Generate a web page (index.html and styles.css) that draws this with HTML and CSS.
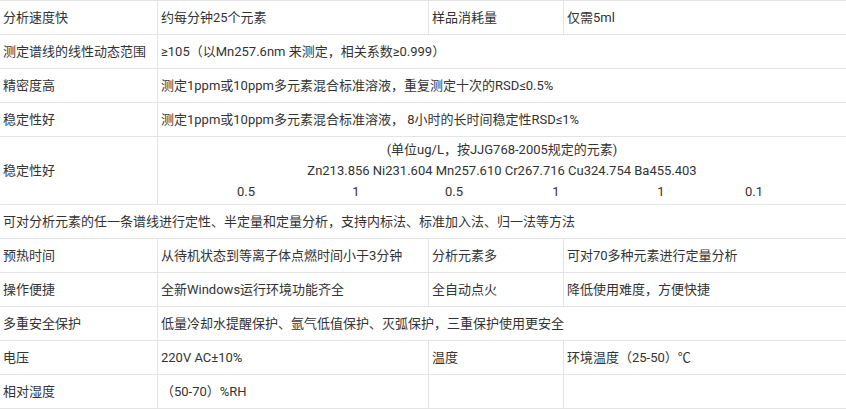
FILE: index.html
```html
<!DOCTYPE html>
<html lang="zh-CN">
<head>
<meta charset="utf-8">
<title>参数</title>
<link rel="stylesheet" href="styles.css">
</head>
<body>
<table class="spec">
  <colgroup>
    <col class="c1"><col class="c2"><col class="c3"><col class="c4">
  </colgroup>
  <tbody>
    <tr><td>分析速度快</td><td>约每分钟25个元素</td><td>样品消耗量</td><td>仅需5ml</td></tr>
    <tr><td>测定谱线的线性动态范围</td><td colspan="3">≥105（以Mn257.6nm 来测定，相关系数≥0.999）</td></tr>
    <tr><td>精密度高</td><td colspan="3">测定1ppm或10ppm多元素混合标准溶液，重复测定十次的RSD≤0.5%</td></tr>
    <tr><td>稳定性好</td><td colspan="3">测定1ppm或10ppm多元素混合标准溶液， 8小时的长时间稳定性RSD≤1%</td></tr>
    <tr class="tall">
      <td>稳定性好</td>
      <td colspan="3" class="center">
        <div class="line">(单位ug/L，按JJG768-2005规定的元素)</div>
        <div class="line">Zn213.856 Ni231.604 Mn257.610 Cr267.716 Cu324.754 Ba455.403</div>
        <div class="line nums"><span class="w100">0.5</span><span class="w120">1</span><span class="w76">0.5</span><span class="w128">1</span><span class="w82">1</span><span class="w104">0.1</span></div>
      </td>
    </tr>
    <tr><td colspan="4">可对分析元素的任一条谱线进行定性、半定量和定量分析，支持内标法、标准加入法、归一法等方法</td></tr>
    <tr><td>预热时间</td><td>从待机状态到等离子体点燃时间小于3分钟</td><td>分析元素多</td><td>可对70多种元素进行定量分析</td></tr>
    <tr><td>操作便捷</td><td>全新Windows运行环境功能齐全</td><td>全自动点火</td><td>降低使用难度，方便快捷</td></tr>
    <tr><td>多重安全保护</td><td colspan="3">低量冷却水提醒保护、氩气低值保护、灭弧保护，三重保护使用更安全</td></tr>
    <tr><td>电压</td><td>220V AC±10%</td><td>温度</td><td>环境温度（25-50）℃</td></tr>
    <tr><td>相对湿度</td><td>（50-70）%RH</td><td></td><td></td></tr>
  </tbody>
</table>
</body>
</html>
```
FILE: styles.css
```css
html, body {
  margin: 0;
  padding: 0;
  background: #fff;
}
body {
  font-family: Roboto, "Noto Sans CJK SC", sans-serif;
  font-size: 13px;
  color: #333;
  overflow: hidden;
}
.spec {
  border-collapse: collapse;
  table-layout: fixed;
  width: 847px;
  margin-left: -1px;
}
.c1 { width: 158px; }
.c2 { width: 271px; }
.c3 { width: 135px; }
.c4 { width: 283px; }
.spec td {
  border: 1px solid #e4e4e4;
  height: 34px;
  padding: 0 3px;
  box-sizing: border-box;
  line-height: 20px;
  white-space: nowrap;
  vertical-align: middle;
}
.spec tr.tall td {
  height: 68px;
}
.spec td.center {
  text-align: center;
}
.line {
  line-height: 21px;
  height: 21px;
}
.nums {
  display: flex;
  padding-left: 35px;
}
.nums span {
  text-align: center;
  flex: none;
}
.w76 { width: 76px; }
.w82 { width: 82px; }
.w100 { width: 100px; }
.w104 { width: 104px; }
.w120 { width: 120px; }
.w128 { width: 128px; }
```
